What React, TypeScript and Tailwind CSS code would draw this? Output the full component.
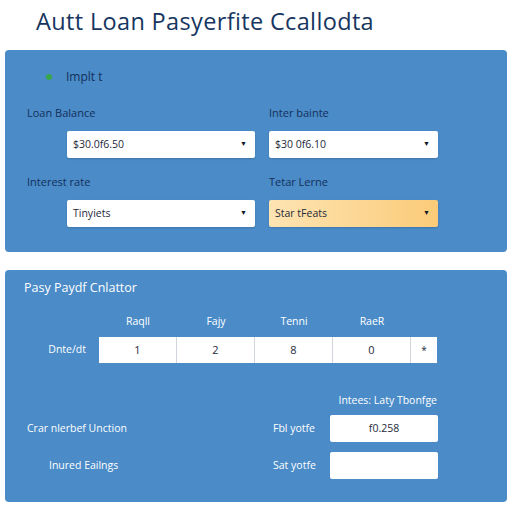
import React from "react";

const font = { fontFamily: '"Open Sans", "Liberation Sans", sans-serif' };

function Select({ value, orange }: { value: string; orange?: boolean }) {
  return (
    <div
      className={`flex h-[27px] items-center justify-between rounded-[2px] pl-[6px] pr-[8px] text-[10.5px] text-gray-800 shadow-[0_1px_2px_rgba(0,0,0,0.15)] ${
        orange ? "bg-gradient-to-r from-[#fde4b2] to-[#fbcb78]" : "bg-white"
      }`}
    >
      <span>{value}</span>
      <span className="text-[7px] text-gray-900">▼</span>
    </div>
  );
}

export default function App() {
  const headers = ["Raqll", "Fajy", "Tenni", "RaeR"];
  const cells = ["1", "2", "8", "0"];

  return (
    <div className="h-[512px] w-[512px] overflow-hidden bg-white" style={font}>
      <h1 className="h-[50px] pl-[36px] pt-[4px] text-[23.5px] font-medium tracking-[0.35px] text-[#17365f]">
        Autt Loan Pasyerfite Ccallodta
      </h1>

      {/* inputs panel */}
      <div className="mx-[5px] h-[202px] rounded-[4px] bg-[#4a8bc8] pl-[22px] text-[#14305a]">
        <div className="flex h-[52px] items-center gap-[14px] pl-[19px] pt-[1px] text-[12px]">
          <span className="h-[6px] w-[6px] rounded-full bg-[#3aa64a]" />
          <span>Implt t</span>
        </div>
        <div className="flex gap-[14px]">
          <div className="w-[228px]">
            <div className="flex h-[29px] items-center pb-[6px] text-[11px]">Loan Balance</div>
            <div className="ml-[40px]">
              <Select value="$30.0f6.50" />
            </div>
            <div className="flex h-[42px] items-center pt-[6px] text-[11px]">Interest rate</div>
            <div className="ml-[40px]">
              <Select value="Tinyiets" />
            </div>
          </div>
          <div className="w-[169px]">
            <div className="flex h-[29px] items-center pb-[6px] text-[11px]">Inter bainte</div>
            <Select value="$30 0f6.10" />
            <div className="flex h-[42px] items-center pt-[6px] text-[11px]">Tetar Lerne</div>
            <Select value="Star tFeats" orange />
          </div>
        </div>
      </div>

      {/* calculator panel */}
      <div className="mx-[5px] mt-[18px] h-[232px] rounded-[4px] bg-[#4a8bc8] text-white">
        <div className="flex h-[36px] items-center pl-[19px] pt-[1px] text-[12.5px]">
          Pasy Paydf Cnlattor
        </div>
        <div className="flex h-[31px] items-center pl-[94px] text-[10.5px]">
          {headers.map((h) => (
            <div key={h} className="w-[78px] text-center">
              {h}
            </div>
          ))}
        </div>
        <div className="flex h-[26px] items-center">
          <div className="w-[83px] pr-[2px] text-right text-[10.5px]">Dnte/dt</div>
          <div className="ml-[11px] flex h-[26px] bg-white text-[11px] text-gray-800">
            {cells.map((c, i) => (
              <div
                key={i}
                className={`flex w-[78px] items-center justify-center border-r border-gray-300 ${
                  i === 3 ? "w-[77px]" : ""
                }`}
              >
                {c}
              </div>
            ))}
            <div className="flex w-[26px] items-center justify-center text-[10px]">*</div>
          </div>
        </div>
        <div className="flex h-[52px] items-end justify-end pb-[6px] pr-[70px] text-[10.5px]">
          Intees: Laty Tbonfge
        </div>
        <div className="flex h-[27px] items-center text-[10.5px]">
          <div className="w-[246px] pl-[22px]">Crar nlerbef Unction</div>
          <div className="w-[79px] pl-[22px]">Fbl yotfe</div>
          <div className="flex h-[27px] w-[108px] items-center justify-center rounded-[2px] bg-white text-[10.5px] text-gray-800">
            f0.258
          </div>
        </div>
        <div className="mt-[10px] flex h-[27px] items-center text-[10.5px]">
          <div className="w-[246px] pl-[44px]">Inured Eailngs</div>
          <div className="w-[79px] pl-[22px]">Sat yotfe</div>
          <div className="h-[27px] w-[108px] rounded-[2px] bg-white" />
        </div>
      </div>
    </div>
  );
}
